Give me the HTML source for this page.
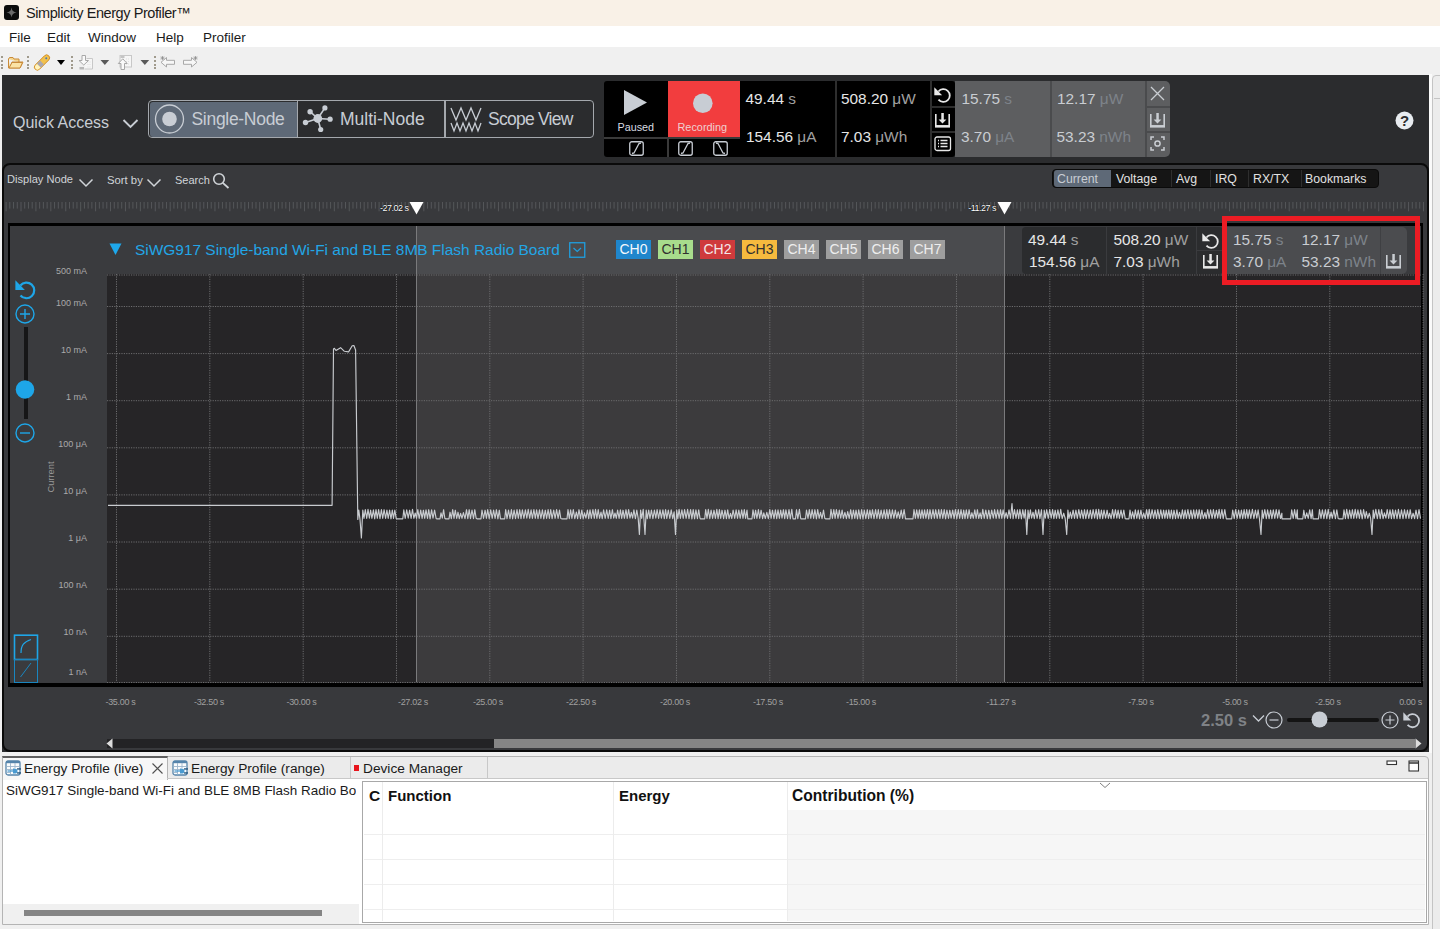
<!DOCTYPE html><html><head><meta charset="utf-8"><style>
*{margin:0;padding:0;box-sizing:border-box}
html,body{width:1440px;height:929px;overflow:hidden;background:#f0f0f0;font-family:"Liberation Sans", sans-serif}
.a{position:absolute;white-space:nowrap}
svg{position:absolute;overflow:visible}
</style></head><body>
<div class="a" style="left:0;top:0;width:1440px;height:26px;background:#f9f1e7"></div>
<div class="a" style="left:4px;top:5px;width:15px;height:15px;background:#0c0c0c;border-radius:3px"></div>
<svg style="left:4px;top:5px" width="15" height="15"><path d="M7.5,2.5 Q8,7 12.5,7.5 Q8,8 7.5,12.5 Q7,8 2.5,7.5 Q7,7 7.5,2.5Z" fill="#6a6a6a"/></svg>
<div class="a" style="left:26px;top:4.8px;font-size:14.5px;letter-spacing:-0.42px;color:#1a1a1a">Simplicity Energy Profiler™</div>
<div class="a" style="left:0;top:26px;width:1440px;height:21px;background:#ffffff"></div>
<div class="a" style="left:9px;top:30px;font-size:13.5px;color:#1a1a1a">File</div>
<div class="a" style="left:47px;top:30px;font-size:13.5px;color:#1a1a1a">Edit</div>
<div class="a" style="left:88px;top:30px;font-size:13.5px;color:#1a1a1a">Window</div>
<div class="a" style="left:156px;top:30px;font-size:13.5px;color:#1a1a1a">Help</div>
<div class="a" style="left:203px;top:30px;font-size:13.5px;color:#1a1a1a">Profiler</div>
<div class="a" style="left:0;top:47px;width:1440px;height:28px;background:#f0f0f0"></div>
<div class="a" style="left:1px;top:55.5px;width:2px;height:2px;background:#a09a8c"></div>
<div class="a" style="left:1px;top:59.5px;width:2px;height:2px;background:#a09a8c"></div>
<div class="a" style="left:1px;top:63.5px;width:2px;height:2px;background:#a09a8c"></div>
<div class="a" style="left:1px;top:67px;width:2px;height:2px;background:#a09a8c"></div>
<div class="a" style="left:27px;top:55.5px;width:2px;height:2px;background:#a09a8c"></div>
<div class="a" style="left:27px;top:59.5px;width:2px;height:2px;background:#a09a8c"></div>
<div class="a" style="left:27px;top:63.5px;width:2px;height:2px;background:#a09a8c"></div>
<div class="a" style="left:27px;top:67px;width:2px;height:2px;background:#a09a8c"></div>
<div class="a" style="left:71px;top:55.5px;width:2px;height:2px;background:#a09a8c"></div>
<div class="a" style="left:71px;top:59.5px;width:2px;height:2px;background:#a09a8c"></div>
<div class="a" style="left:71px;top:63.5px;width:2px;height:2px;background:#a09a8c"></div>
<div class="a" style="left:71px;top:67px;width:2px;height:2px;background:#a09a8c"></div>
<div class="a" style="left:154px;top:55.5px;width:2px;height:2px;background:#a09a8c"></div>
<div class="a" style="left:154px;top:59.5px;width:2px;height:2px;background:#a09a8c"></div>
<div class="a" style="left:154px;top:63.5px;width:2px;height:2px;background:#a09a8c"></div>
<div class="a" style="left:154px;top:67px;width:2px;height:2px;background:#a09a8c"></div>
<svg style="left:7px;top:56px" width="17" height="14"><path d="M1.5,3 L1.5,12 L13,12 L16,6 L5,6 L3,11 M1.5,3 L2.5,1.5 L6,1.5 L7,3 L12,3 L12,6" fill="#f5d58a" stroke="#c98b3a" stroke-width="1"/><path d="M2,12 L5,6.5 L15.5,6.5 L13,12 Z" fill="#fbe3a6" stroke="#c98b3a" stroke-width="1"/></svg>
<svg style="left:32px;top:53px" width="20" height="19"><g transform="rotate(-45 10 9.5)"><rect x="0.5" y="6.5" width="19" height="6" rx="3" fill="#f2c24e" stroke="#d08a24" stroke-width="0.9"/><rect x="5.5" y="6.8" width="4.5" height="5.4" fill="#a9a7b0"/><path d="M1,9.5 Q1,7 3.5,7 L5.5,7 L5.5,12 L3.5,12 Q1,12 1,9.5Z" fill="#fff4c0"/><circle cx="16" cy="9.5" r="1" fill="#4a7ab8"/></g></svg>
<svg style="left:56px;top:59px" width="10" height="7"><path d="M1,1 L9,1 L5,6 Z" fill="#000"/></svg>
<svg style="left:78px;top:54px" width="16" height="17"><path d="M8.5,4.5 L14.5,4.5 L14.5,15 L6.5,15" fill="#f6f6f6" stroke="#c8c8c8" stroke-width="1"/><path d="M9.5,8 L13,8 M9.5,10.5 L13,10.5 M9.5,13 L13,13" stroke="#dadada" stroke-width="0.8" stroke-dasharray="1,1"/><path d="M4,1.5 L7.5,1.5 L7.5,6.5 L10.5,6.5 L5.75,11 L1,6.5 L4,6.5 Z" fill="#fafafa" stroke="#a8a8a8" stroke-width="1"/><rect x="1.5" y="13" width="4.5" height="2.5" fill="#b8b8b8"/></svg>
<svg style="left:100px;top:59px" width="10" height="7"><path d="M0.5,1 L9.2,1 L4.85,6 Z" fill="#5a5a5a"/></svg>
<svg style="left:117px;top:54px" width="16" height="17"><rect x="3" y="1.5" width="11.5" height="11.5" fill="#f6f6f6" stroke="#c8c8c8" stroke-width="1"/><rect x="3.5" y="2" width="4" height="2" fill="#c4c4c4"/><path d="M9,5 L12.5,5 M9,7.5 L12.5,7.5 M9,10 L12.5,10" stroke="#dadada" stroke-width="0.8" stroke-dasharray="1,1"/><path d="M4,15.5 L7.5,15.5 L7.5,9.5 L10.2,9.5 L5.75,4.8 L1.3,9.5 L4,9.5 Z" fill="#fafafa" stroke="#a8a8a8" stroke-width="1"/></svg>
<svg style="left:140px;top:59px" width="10" height="7"><path d="M0.5,1 L9.2,1 L4.85,6 Z" fill="#5a5a5a"/></svg>
<svg style="left:160px;top:56px" width="16" height="13"><path d="M6.5,1.5 L1,6.3 L6.5,11 L6.5,8.3 L14.5,8.3 L14.5,4.3 L6.5,4.3 Z" fill="#f7f7f7" stroke="#a8a8a8" stroke-width="1" stroke-linejoin="round"/><path d="M1,0.5 L4,3.5 M4,0.5 L1,3.5 M2.5,0 L2.5,4 M0.5,2 L4.5,2" stroke="#8a8a8a" stroke-width="0.7"/></svg>
<svg style="left:181.5px;top:56px" width="16" height="13"><path d="M9.5,1.5 L15,6.3 L9.5,11 L9.5,8.3 L1.5,8.3 L1.5,4.3 L9.5,4.3 Z" fill="#f7f7f7" stroke="#a8a8a8" stroke-width="1" stroke-linejoin="round"/><path d="M12,0.5 L15,3.5 M15,0.5 L12,3.5 M13.5,0 L13.5,4 M11.5,2 L15.5,2" stroke="#8a8a8a" stroke-width="0.7"/></svg>
<div class="a" style="left:2px;top:75px;width:1427px;height:677px;background:#2b2c2e"></div>
<div class="a" style="left:1429px;top:74px;width:3px;height:855px;background:#fafafa"></div>
<div class="a" style="left:1432px;top:75px;width:30px;height:870px;background:#ececec;border:1.6px solid #c4c4c4;border-radius:4px"></div>
<div class="a" style="left:1433.5px;top:98px;width:8px;height:1px;background:#c4c4c4"></div>
<div class="a" style="left:13px;top:113.5px;font-size:16px;color:#c8cdd4">Quick Access</div>
<svg style="left:122px;top:118px" width="17" height="11"><path d="M1.5,2 L8.5,9 L15.5,2" fill="none" stroke="#c8cdd4" stroke-width="1.9"/></svg>
<div class="a" style="left:148px;top:100px;width:446px;height:38px;border:1.5px solid #a4a8ad;border-radius:4px;background:#2b2c2e"></div>
<div class="a" style="left:149.5px;top:101.5px;width:147px;height:35px;background:#5e6977;border-radius:3px 0 0 3px"></div>
<div class="a" style="left:296.5px;top:101px;width:1.5px;height:36px;background:#a4a8ad"></div>
<div class="a" style="left:444px;top:101px;width:1.5px;height:36px;background:#a4a8ad"></div>
<svg style="left:154px;top:104px" width="32" height="31"><circle cx="15.5" cy="15" r="14" fill="none" stroke="#c8cdd4" stroke-width="1.3"/><circle cx="15.5" cy="15" r="7.3" fill="#c8cdd4"/></svg>
<div class="a" style="left:191.5px;top:109px;font-size:17.5px;letter-spacing:-0.3px;color:#c8cdd4">Single-Node</div>
<svg style="left:298px;top:102px" width="40" height="34"><g stroke="#c8cdd4" stroke-width="1.6" fill="#c8cdd4"><line x1="19.8" y1="16.5" x2="26.9" y2="5.9"/><line x1="19.8" y1="16.5" x2="12.1" y2="9.7"/><line x1="19.8" y1="16.5" x2="32.1" y2="17.2"/><line x1="19.8" y1="16.5" x2="22.7" y2="27.5"/><line x1="19.8" y1="16.5" x2="7.5" y2="20.5"/></g><g fill="#c8cdd4"><circle cx="19.8" cy="16.5" r="4.4"/><circle cx="26.9" cy="5.9" r="2.6"/><circle cx="12.1" cy="9.7" r="2.7"/><circle cx="32.1" cy="17.2" r="2.6"/><circle cx="22.7" cy="27.5" r="2.6"/><circle cx="7.5" cy="20.5" r="2.7"/></g></svg>
<div class="a" style="left:340px;top:109px;font-size:17.5px;color:#c8cdd4">Multi-Node</div>
<svg style="left:450px;top:106px" width="32" height="27"><path d="M1,2 L6,14 L11,2 L16,14 L21,2 L26,14 L31,2" fill="none" stroke="#c8cdd4" stroke-width="1.3"/><path d="M1,17 L4,25 L7,17 L10,25 L13,17 L16,25 L19,17 L22,25 L25,17 L28,25 L31,17" fill="none" stroke="#c8cdd4" stroke-width="1.3"/></svg>
<div class="a" style="left:488px;top:109px;font-size:17.5px;letter-spacing:-0.75px;color:#c8cdd4">Scope View</div>
<div class="a" style="left:604px;top:81px;width:351px;height:76px;background:#000;border-radius:3px"></div>
<div class="a" style="left:668px;top:81px;width:72px;height:56px;background:#f23d3e"></div>
<div class="a" style="left:604px;top:137px;width:136px;height:1.5px;background:#3a3a3a"></div>
<div class="a" style="left:667px;top:137px;width:1.5px;height:20px;background:#3a3a3a"></div>
<svg style="left:623px;top:89px" width="26" height="28"><path d="M1,1 L24,13.5 L1,26 Z" fill="#c8cdd4"/></svg>
<div class="a" style="left:617.5px;top:121px;font-size:10.8px;color:#d8dce0">Paused</div>
<svg style="left:692px;top:93px" width="22" height="22"><circle cx="10.8" cy="10.2" r="9.8" fill="#c8cdd4"/></svg>
<div class="a" style="left:677.5px;top:121px;font-size:10.9px;color:#f0d0d0">Recording</div>
<svg style="left:629px;top:141px" width="15" height="15"><rect x="0.75" y="0.75" width="13.5" height="13.5" rx="2" fill="none" stroke="#c8cdd4" stroke-width="1.3"/><path d="M3,12.5 L5,12 L10,2.5 L12,2" fill="none" stroke="#c8cdd4" stroke-width="1.3"/></svg>
<svg style="left:678px;top:141px" width="15" height="15"><rect x="0.75" y="0.75" width="13.5" height="13.5" rx="2" fill="none" stroke="#c8cdd4" stroke-width="1.3"/><path d="M3,12.5 L5,12 L10,2.5 L12,2" fill="none" stroke="#c8cdd4" stroke-width="1.3"/></svg>
<svg style="left:713px;top:141px" width="15" height="15"><rect x="0.75" y="0.75" width="13.5" height="13.5" rx="2" fill="none" stroke="#c8cdd4" stroke-width="1.3"/><path d="M3,2 L5,2.5 L10,12 L12,12.5" fill="none" stroke="#c8cdd4" stroke-width="1.3"/></svg>
<div class="a" style="left:835px;top:81px;width:1.5px;height:76px;background:#2e2e2e"></div>
<div class="a" style="left:930px;top:81px;width:1.5px;height:76px;background:#2e2e2e"></div>
<div class="a" style="left:931px;top:106px;width:24px;height:1.5px;background:#2e2e2e"></div>
<div class="a" style="left:931px;top:131px;width:24px;height:1.5px;background:#2e2e2e"></div>
<div class="a" style="left:745.5px;top:89.5px;font-size:15.4px;color:#e6e6e6">49.44 <span style="color:#a0a0a0">s</span></div>
<div class="a" style="left:746px;top:127.5px;font-size:15.4px;color:#e6e6e6">154.56 <span style="color:#a0a0a0">μA</span></div>
<div class="a" style="left:841px;top:89.5px;font-size:15.4px;color:#e6e6e6">508.20 <span style="color:#a0a0a0">μW</span></div>
<div class="a" style="left:841px;top:127.5px;font-size:15.4px;color:#e6e6e6">7.03 <span style="color:#a0a0a0">μWh</span></div>
<svg style="left:933.5px;top:86.5px" width="18.0" height="17.0" viewBox="0 0 18 17"><path d="M0.3,0.3 L0.3,8.3 L8.1,8.3 Z" fill="#e8e8e8"/><path d="M4.4,4.5 A6.4,6.4 0 1 1 4.5,12.7" fill="none" stroke="#e8e8e8" stroke-width="1.8"/></svg>
<svg style="left:933.5px;top:112.5px" width="18.0" height="16.0" viewBox="0 0 18 16"><path d="M1.8,1 L1.8,13 L15.2,13 L15.2,1" fill="none" stroke="#e8e8e8" stroke-width="1.6"/><rect x="1" y="12.2" width="15" height="2.4" fill="#e8e8e8"/><rect x="7.3" y="0" width="2.5" height="7" fill="#e8e8e8"/><path d="M4.6,6.6 L12.4,6.6 L8.5,10.5 Z" fill="#e8e8e8"/></svg>
<svg style="left:934px;top:136px" width="18" height="16"><rect x="1" y="1" width="15.5" height="13.5" rx="2" fill="none" stroke="#e8e8e8" stroke-width="1.3"/><path d="M4,4.5 L5,4.5 M4,7.5 L5,7.5 M4,10.5 L5,10.5 M6.5,4.5 L13.5,4.5 M6.5,7.5 L13.5,7.5 M6.5,10.5 L13.5,10.5" stroke="#e8e8e8" stroke-width="1.3"/></svg>
<div class="a" style="left:955px;top:81px;width:215px;height:76px;background:#5d5e60;border-radius:0 5px 5px 0"></div>
<div class="a" style="left:1050px;top:81px;width:1.5px;height:76px;background:#4a4b4d"></div>
<div class="a" style="left:1145px;top:81px;width:1.5px;height:76px;background:#4a4b4d"></div>
<div class="a" style="left:1146px;top:106px;width:24px;height:1.5px;background:#4a4b4d"></div>
<div class="a" style="left:1146px;top:131px;width:24px;height:1.5px;background:#4a4b4d"></div>
<div class="a" style="left:961.5px;top:89.5px;font-size:15.4px;color:#c9cdd2">15.75 <span style="color:#7d838a">s</span></div>
<div class="a" style="left:961px;top:127.5px;font-size:15.4px;color:#c9cdd2">3.70 <span style="color:#7d838a">μA</span></div>
<div class="a" style="left:1057px;top:89.5px;font-size:15.4px;color:#c9cdd2">12.17 <span style="color:#7d838a">μW</span></div>
<div class="a" style="left:1056.5px;top:127.5px;font-size:15.4px;color:#c9cdd2">53.23 <span style="color:#7d838a">nWh</span></div>
<svg style="left:1149px;top:85px" width="17" height="17"><path d="M2,2 L15,15 M15,2 L2,15" stroke="#c9cdd2" stroke-width="1.3"/></svg>
<svg style="left:1149px;top:112.5px" width="18.0" height="16.0" viewBox="0 0 18 16"><path d="M1.8,1 L1.8,13 L15.2,13 L15.2,1" fill="none" stroke="#c9cdd2" stroke-width="1.6"/><rect x="1" y="12.2" width="15" height="2.4" fill="#c9cdd2"/><rect x="7.3" y="0" width="2.5" height="7" fill="#c9cdd2"/><path d="M4.6,6.6 L12.4,6.6 L8.5,10.5 Z" fill="#c9cdd2"/></svg>
<svg style="left:1149px;top:135px" width="17" height="17"><path d="M2,5 L2,2 L5,2 M12,2 L15,2 L15,5 M15,12 L15,15 L12,15 M5,15 L2,15 L2,12" fill="none" stroke="#c9cdd2" stroke-width="1.5"/><circle cx="8.5" cy="8.5" r="2.6" fill="none" stroke="#c9cdd2" stroke-width="1.5"/></svg>
<svg style="left:1395px;top:111px" width="20" height="20"><circle cx="9.5" cy="9.5" r="9" fill="#e8ecf0"/><text x="9.6" y="15.3" text-anchor="middle" font-family="Liberation Sans" font-weight="bold" font-size="15" fill="#2b2c2e">?</text></svg>
<div class="a" style="left:2px;top:163px;width:1427px;height:589px;background:#38393c;border:2px solid #0a0a0a;border-radius:8px"></div>
<div class="a" style="left:7px;top:173px;font-size:11.1px;color:#d0d4d8">Display Node</div>
<svg style="left:78px;top:178px" width="16" height="10"><path d="M1.5,1.5 L8,8 L14.5,1.5" fill="none" stroke="#d0d4d8" stroke-width="1.5"/></svg>
<div class="a" style="left:107px;top:173.5px;font-size:11.3px;color:#d0d4d8">Sort by</div>
<svg style="left:146px;top:178px" width="16" height="10"><path d="M1.5,1.5 L8,8 L14.5,1.5" fill="none" stroke="#d0d4d8" stroke-width="1.5"/></svg>
<div class="a" style="left:175px;top:173.5px;font-size:11px;color:#d0d4d8">Search</div>
<svg style="left:212px;top:172px" width="18" height="17"><circle cx="7" cy="7" r="5.3" fill="none" stroke="#d0d4d8" stroke-width="1.6"/><path d="M10.8,10.8 L16.5,16" stroke="#d0d4d8" stroke-width="1.8"/></svg>
<div class="a" style="left:1052px;top:168.5px;width:327px;height:19.5px;background:#151515;border:1px solid #0a0a0a;border-radius:4px"></div>
<div class="a" style="left:1053.5px;top:170px;width:57.5px;height:16.5px;background:#5e6977;border-radius:3px 0 0 3px"></div>
<div class="a" style="left:1171px;top:170px;width:1px;height:17px;background:#2e2e2e"></div>
<div class="a" style="left:1210px;top:170px;width:1px;height:17px;background:#2e2e2e"></div>
<div class="a" style="left:1248px;top:170px;width:1px;height:17px;background:#2e2e2e"></div>
<div class="a" style="left:1300.5px;top:170px;width:1px;height:17px;background:#2e2e2e"></div>
<div class="a" style="left:1057px;top:172px;font-size:12.3px;color:#c8cdd4">Current</div>
<div class="a" style="left:1116px;top:172px;font-size:12.3px;color:#e2e2e2">Voltage</div>
<div class="a" style="left:1176px;top:172px;font-size:12.3px;color:#e2e2e2">Avg</div>
<div class="a" style="left:1215px;top:172px;font-size:12.3px;color:#e2e2e2">IRQ</div>
<div class="a" style="left:1253px;top:172px;font-size:12.3px;color:#e2e2e2">RX/TX</div>
<div class="a" style="left:1305px;top:172px;font-size:12.3px;color:#e2e2e2">Bookmarks</div>
<svg style="left:0;top:0" width="1440" height="929"><path d="M6.08,202 L6.08,211.3 M9.81,202 L9.81,208.6 M13.54,202 L13.54,208.6 M17.27,202 L17.27,208.6 M21.00,202 L21.00,211.3 M24.73,202 L24.73,208.6 M28.46,202 L28.46,208.6 M32.19,202 L32.19,208.6 M35.92,202 L35.92,211.3 M39.65,202 L39.65,208.6 M43.38,202 L43.38,208.6 M47.11,202 L47.11,208.6 M50.84,202 L50.84,211.3 M54.57,202 L54.57,208.6 M58.30,202 L58.30,208.6 M62.03,202 L62.03,208.6 M65.76,202 L65.76,211.3 M69.49,202 L69.49,208.6 M73.22,202 L73.22,208.6 M76.95,202 L76.95,208.6 M80.68,202 L80.68,211.3 M84.41,202 L84.41,208.6 M88.14,202 L88.14,208.6 M91.87,202 L91.87,208.6 M95.60,202 L95.60,211.3 M99.33,202 L99.33,208.6 M103.06,202 L103.06,208.6 M106.79,202 L106.79,208.6 M110.52,202 L110.52,211.3 M114.25,202 L114.25,208.6 M117.98,202 L117.98,208.6 M121.71,202 L121.71,208.6 M125.44,202 L125.44,211.3 M129.17,202 L129.17,208.6 M132.90,202 L132.90,208.6 M136.63,202 L136.63,208.6 M140.36,202 L140.36,211.3 M144.09,202 L144.09,208.6 M147.82,202 L147.82,208.6 M151.55,202 L151.55,208.6 M155.28,202 L155.28,211.3 M159.01,202 L159.01,208.6 M162.74,202 L162.74,208.6 M166.47,202 L166.47,208.6 M170.20,202 L170.20,211.3 M173.93,202 L173.93,208.6 M177.66,202 L177.66,208.6 M181.39,202 L181.39,208.6 M185.12,202 L185.12,211.3 M188.85,202 L188.85,208.6 M192.58,202 L192.58,208.6 M196.31,202 L196.31,208.6 M200.04,202 L200.04,211.3 M203.77,202 L203.77,208.6 M207.50,202 L207.50,208.6 M211.23,202 L211.23,208.6 M214.96,202 L214.96,211.3 M218.69,202 L218.69,208.6 M222.42,202 L222.42,208.6 M226.15,202 L226.15,208.6 M229.88,202 L229.88,211.3 M233.61,202 L233.61,208.6 M237.34,202 L237.34,208.6 M241.07,202 L241.07,208.6 M244.80,202 L244.80,211.3 M248.53,202 L248.53,208.6 M252.26,202 L252.26,208.6 M255.99,202 L255.99,208.6 M259.72,202 L259.72,211.3 M263.45,202 L263.45,208.6 M267.18,202 L267.18,208.6 M270.91,202 L270.91,208.6 M274.64,202 L274.64,211.3 M278.37,202 L278.37,208.6 M282.10,202 L282.10,208.6 M285.83,202 L285.83,208.6 M289.56,202 L289.56,211.3 M293.29,202 L293.29,208.6 M297.02,202 L297.02,208.6 M300.75,202 L300.75,208.6 M304.48,202 L304.48,211.3 M308.21,202 L308.21,208.6 M311.94,202 L311.94,208.6 M315.67,202 L315.67,208.6 M319.40,202 L319.40,211.3 M323.13,202 L323.13,208.6 M326.86,202 L326.86,208.6 M330.59,202 L330.59,208.6 M334.32,202 L334.32,211.3 M338.05,202 L338.05,208.6 M341.78,202 L341.78,208.6 M345.51,202 L345.51,208.6 M349.24,202 L349.24,211.3 M352.97,202 L352.97,208.6 M356.70,202 L356.70,208.6 M360.43,202 L360.43,208.6 M364.16,202 L364.16,211.3 M367.89,202 L367.89,208.6 M371.62,202 L371.62,208.6 M375.35,202 L375.35,208.6 M379.08,202 L379.08,211.3 M382.81,202 L382.81,208.6 M386.54,202 L386.54,208.6 M390.27,202 L390.27,208.6 M394.00,202 L394.00,211.3 M397.73,202 L397.73,208.6 M401.46,202 L401.46,208.6 M405.19,202 L405.19,208.6 M408.92,202 L408.92,211.3 M412.65,202 L412.65,208.6 M416.38,202 L416.38,208.6 M420.11,202 L420.11,208.6 M423.84,202 L423.84,211.3 M427.57,202 L427.57,208.6 M431.30,202 L431.30,208.6 M435.03,202 L435.03,208.6 M438.76,202 L438.76,211.3 M442.49,202 L442.49,208.6 M446.22,202 L446.22,208.6 M449.95,202 L449.95,208.6 M453.68,202 L453.68,211.3 M457.41,202 L457.41,208.6 M461.14,202 L461.14,208.6 M464.87,202 L464.87,208.6 M468.60,202 L468.60,211.3 M472.33,202 L472.33,208.6 M476.06,202 L476.06,208.6 M479.79,202 L479.79,208.6 M483.52,202 L483.52,211.3 M487.25,202 L487.25,208.6 M490.98,202 L490.98,208.6 M494.71,202 L494.71,208.6 M498.44,202 L498.44,211.3 M502.17,202 L502.17,208.6 M505.90,202 L505.90,208.6 M509.63,202 L509.63,208.6 M513.36,202 L513.36,211.3 M517.09,202 L517.09,208.6 M520.82,202 L520.82,208.6 M524.55,202 L524.55,208.6 M528.28,202 L528.28,211.3 M532.01,202 L532.01,208.6 M535.74,202 L535.74,208.6 M539.47,202 L539.47,208.6 M543.20,202 L543.20,211.3 M546.93,202 L546.93,208.6 M550.66,202 L550.66,208.6 M554.39,202 L554.39,208.6 M558.12,202 L558.12,211.3 M561.85,202 L561.85,208.6 M565.58,202 L565.58,208.6 M569.31,202 L569.31,208.6 M573.04,202 L573.04,211.3 M576.77,202 L576.77,208.6 M580.50,202 L580.50,208.6 M584.23,202 L584.23,208.6 M587.96,202 L587.96,211.3 M591.69,202 L591.69,208.6 M595.42,202 L595.42,208.6 M599.15,202 L599.15,208.6 M602.88,202 L602.88,211.3 M606.61,202 L606.61,208.6 M610.34,202 L610.34,208.6 M614.07,202 L614.07,208.6 M617.80,202 L617.80,211.3 M621.53,202 L621.53,208.6 M625.26,202 L625.26,208.6 M628.99,202 L628.99,208.6 M632.72,202 L632.72,211.3 M636.45,202 L636.45,208.6 M640.18,202 L640.18,208.6 M643.91,202 L643.91,208.6 M647.64,202 L647.64,211.3 M651.37,202 L651.37,208.6 M655.10,202 L655.10,208.6 M658.83,202 L658.83,208.6 M662.56,202 L662.56,211.3 M666.29,202 L666.29,208.6 M670.02,202 L670.02,208.6 M673.75,202 L673.75,208.6 M677.48,202 L677.48,211.3 M681.21,202 L681.21,208.6 M684.94,202 L684.94,208.6 M688.67,202 L688.67,208.6 M692.40,202 L692.40,211.3 M696.13,202 L696.13,208.6 M699.86,202 L699.86,208.6 M703.59,202 L703.59,208.6 M707.32,202 L707.32,211.3 M711.05,202 L711.05,208.6 M714.78,202 L714.78,208.6 M718.51,202 L718.51,208.6 M722.24,202 L722.24,211.3 M725.97,202 L725.97,208.6 M729.70,202 L729.70,208.6 M733.43,202 L733.43,208.6 M737.16,202 L737.16,211.3 M740.89,202 L740.89,208.6 M744.62,202 L744.62,208.6 M748.35,202 L748.35,208.6 M752.08,202 L752.08,211.3 M755.81,202 L755.81,208.6 M759.54,202 L759.54,208.6 M763.27,202 L763.27,208.6 M767.00,202 L767.00,211.3 M770.73,202 L770.73,208.6 M774.46,202 L774.46,208.6 M778.19,202 L778.19,208.6 M781.92,202 L781.92,211.3 M785.65,202 L785.65,208.6 M789.38,202 L789.38,208.6 M793.11,202 L793.11,208.6 M796.84,202 L796.84,211.3 M800.57,202 L800.57,208.6 M804.30,202 L804.30,208.6 M808.03,202 L808.03,208.6 M811.76,202 L811.76,211.3 M815.49,202 L815.49,208.6 M819.22,202 L819.22,208.6 M822.95,202 L822.95,208.6 M826.68,202 L826.68,211.3 M830.41,202 L830.41,208.6 M834.14,202 L834.14,208.6 M837.87,202 L837.87,208.6 M841.60,202 L841.60,211.3 M845.33,202 L845.33,208.6 M849.06,202 L849.06,208.6 M852.79,202 L852.79,208.6 M856.52,202 L856.52,211.3 M860.25,202 L860.25,208.6 M863.98,202 L863.98,208.6 M867.71,202 L867.71,208.6 M871.44,202 L871.44,211.3 M875.17,202 L875.17,208.6 M878.90,202 L878.90,208.6 M882.63,202 L882.63,208.6 M886.36,202 L886.36,211.3 M890.09,202 L890.09,208.6 M893.82,202 L893.82,208.6 M897.55,202 L897.55,208.6 M901.28,202 L901.28,211.3 M905.01,202 L905.01,208.6 M908.74,202 L908.74,208.6 M912.47,202 L912.47,208.6 M916.20,202 L916.20,211.3 M919.93,202 L919.93,208.6 M923.66,202 L923.66,208.6 M927.39,202 L927.39,208.6 M931.12,202 L931.12,211.3 M934.85,202 L934.85,208.6 M938.58,202 L938.58,208.6 M942.31,202 L942.31,208.6 M946.04,202 L946.04,211.3 M949.77,202 L949.77,208.6 M953.50,202 L953.50,208.6 M957.23,202 L957.23,208.6 M960.96,202 L960.96,211.3 M964.69,202 L964.69,208.6 M968.42,202 L968.42,208.6 M972.15,202 L972.15,208.6 M975.88,202 L975.88,211.3 M979.61,202 L979.61,208.6 M983.34,202 L983.34,208.6 M987.07,202 L987.07,208.6 M990.80,202 L990.80,211.3 M994.53,202 L994.53,208.6 M998.26,202 L998.26,208.6 M1001.99,202 L1001.99,208.6 M1005.72,202 L1005.72,211.3 M1009.45,202 L1009.45,208.6 M1013.18,202 L1013.18,208.6 M1016.91,202 L1016.91,208.6 M1020.64,202 L1020.64,211.3 M1024.37,202 L1024.37,208.6 M1028.10,202 L1028.10,208.6 M1031.83,202 L1031.83,208.6 M1035.56,202 L1035.56,211.3 M1039.29,202 L1039.29,208.6 M1043.02,202 L1043.02,208.6 M1046.75,202 L1046.75,208.6 M1050.48,202 L1050.48,211.3 M1054.21,202 L1054.21,208.6 M1057.94,202 L1057.94,208.6 M1061.67,202 L1061.67,208.6 M1065.40,202 L1065.40,211.3 M1069.13,202 L1069.13,208.6 M1072.86,202 L1072.86,208.6 M1076.59,202 L1076.59,208.6 M1080.32,202 L1080.32,211.3 M1084.05,202 L1084.05,208.6 M1087.78,202 L1087.78,208.6 M1091.51,202 L1091.51,208.6 M1095.24,202 L1095.24,211.3 M1098.97,202 L1098.97,208.6 M1102.70,202 L1102.70,208.6 M1106.43,202 L1106.43,208.6 M1110.16,202 L1110.16,211.3 M1113.89,202 L1113.89,208.6 M1117.62,202 L1117.62,208.6 M1121.35,202 L1121.35,208.6 M1125.08,202 L1125.08,211.3 M1128.81,202 L1128.81,208.6 M1132.54,202 L1132.54,208.6 M1136.27,202 L1136.27,208.6 M1140.00,202 L1140.00,211.3 M1143.73,202 L1143.73,208.6 M1147.46,202 L1147.46,208.6 M1151.19,202 L1151.19,208.6 M1154.92,202 L1154.92,211.3 M1158.65,202 L1158.65,208.6 M1162.38,202 L1162.38,208.6 M1166.11,202 L1166.11,208.6 M1169.84,202 L1169.84,211.3 M1173.57,202 L1173.57,208.6 M1177.30,202 L1177.30,208.6 M1181.03,202 L1181.03,208.6 M1184.76,202 L1184.76,211.3 M1188.49,202 L1188.49,208.6 M1192.22,202 L1192.22,208.6 M1195.95,202 L1195.95,208.6 M1199.68,202 L1199.68,211.3 M1203.41,202 L1203.41,208.6 M1207.14,202 L1207.14,208.6 M1210.87,202 L1210.87,208.6 M1214.60,202 L1214.60,211.3 M1218.33,202 L1218.33,208.6 M1222.06,202 L1222.06,208.6 M1225.79,202 L1225.79,208.6 M1229.52,202 L1229.52,211.3 M1233.25,202 L1233.25,208.6 M1236.98,202 L1236.98,208.6 M1240.71,202 L1240.71,208.6 M1244.44,202 L1244.44,211.3 M1248.17,202 L1248.17,208.6 M1251.90,202 L1251.90,208.6 M1255.63,202 L1255.63,208.6 M1259.36,202 L1259.36,211.3 M1263.09,202 L1263.09,208.6 M1266.82,202 L1266.82,208.6 M1270.55,202 L1270.55,208.6 M1274.28,202 L1274.28,211.3 M1278.01,202 L1278.01,208.6 M1281.74,202 L1281.74,208.6 M1285.47,202 L1285.47,208.6 M1289.20,202 L1289.20,211.3 M1292.93,202 L1292.93,208.6 M1296.66,202 L1296.66,208.6 M1300.39,202 L1300.39,208.6 M1304.12,202 L1304.12,211.3 M1307.85,202 L1307.85,208.6 M1311.58,202 L1311.58,208.6 M1315.31,202 L1315.31,208.6 M1319.04,202 L1319.04,211.3 M1322.77,202 L1322.77,208.6 M1326.50,202 L1326.50,208.6 M1330.23,202 L1330.23,208.6 M1333.96,202 L1333.96,211.3 M1337.69,202 L1337.69,208.6 M1341.42,202 L1341.42,208.6 M1345.15,202 L1345.15,208.6 M1348.88,202 L1348.88,211.3 M1352.61,202 L1352.61,208.6 M1356.34,202 L1356.34,208.6 M1360.07,202 L1360.07,208.6 M1363.80,202 L1363.80,211.3 M1367.53,202 L1367.53,208.6 M1371.26,202 L1371.26,208.6 M1374.99,202 L1374.99,208.6 M1378.72,202 L1378.72,211.3 M1382.45,202 L1382.45,208.6 M1386.18,202 L1386.18,208.6 M1389.91,202 L1389.91,208.6 M1393.64,202 L1393.64,211.3 M1397.37,202 L1397.37,208.6 M1401.10,202 L1401.10,208.6 M1404.83,202 L1404.83,208.6 M1408.56,202 L1408.56,211.3 M1412.29,202 L1412.29,208.6 M1416.02,202 L1416.02,208.6 M1419.75,202 L1419.75,208.6 M1423.48,202 L1423.48,211.3" stroke="#55575a" stroke-width="1"/></svg>
<div class="a" style="left:7.5px;top:223px;width:1415.5px;height:463.5px;background:#000"></div>
<div class="a" style="left:9.5px;top:225.5px;width:1411.5px;height:457px;background:#3a3b3e"></div>
<div class="a" style="left:107px;top:274px;width:1314px;height:408.5px;background:#262527"></div>
<div class="a" style="left:417px;top:225.5px;width:587px;height:48.5px;background:#4a4b4e"></div>
<div class="a" style="left:417px;top:274px;width:587px;height:408px;background:#3c3b3d"></div>
<div class="a" style="left:416px;top:225.5px;width:1px;height:456.5px;background:#7a7a7c"></div>
<div class="a" style="left:1003.5px;top:225.5px;width:1px;height:456.5px;background:#7a7a7c"></div>
<svg style="left:0;top:0" width="1440" height="929"><path d="M116.5,274 L116.5,682 M209.8,274 L209.8,682 M303.2,274 L303.2,682 M396.5,274 L396.5,682 M489.8,274 L489.8,682 M583.1,274 L583.1,682 M676.5,274 L676.5,682 M769.8,274 L769.8,682 M863.1,274 L863.1,682 M956.5,274 L956.5,682 M1049.8,274 L1049.8,682 M1143.1,274 L1143.1,682 M1236.5,274 L1236.5,682 M1329.8,274 L1329.8,682 M1423.1,274 L1423.1,682 M107,275.0 L1421,275.0 M107,306.5 L1421,306.5 M107,353.6 L1421,353.6 M107,400.7 L1421,400.7 M107,447.8 L1421,447.8 M107,494.9 L1421,494.9 M107,542.0 L1421,542.0 M107,589.2 L1421,589.2 M107,636.3 L1421,636.3 M107,682.5 L1421,682.5" stroke="#6c6c6e" stroke-width="1" stroke-dasharray="1.2,1.2" fill="none"/></svg>
<svg style="left:0;top:0" width="1440" height="929"><path d="M108,505.3 L332.1,505.3 L333.5,349 L334.4,348.3 L336,350.5 L340.6,347.7 L344.4,351.3 L348.6,351.9 L352.2,345.8 L353.9,345.5 L355.6,350 L357.8,519.4 L358.8,510 L360,519.4 L361.4,538 L362.8,510 L364.0,518.4 L365.3,509.5 L366.7,518.4 L368.0,509.4 L369.4,518.2 L370.6,510.1 L371.9,518.3 L373.4,509.9 L374.7,518.8 L376.0,509.6 L377.3,518.3 L378.6,509.5 L380.0,518.6 L381.4,509.5 L382.7,518.3 L384.1,509.7 L385.6,518.5 L386.9,510.0 L388.2,518.5 L389.6,510.0 L391.0,518.8 L392.3,510.0 L393.5,518.5 L394.8,510.0 L396.2,518.7 L396.7,518.8 L402.8,518.8 L403.8,509.9 L405.2,518.5 L406.7,509.8 L408.2,518.2 L409.6,510.2 L411.1,518.4 L412.5,509.4 L413.9,518.3 L415.2,513.0 L416.5,518.3 L417.8,509.5 L419.2,518.5 L420.7,510.1 L422.1,518.4 L423.4,510.2 L424.7,518.3 L426.0,509.8 L427.5,518.4 L428.7,509.7 L430.1,518.8 L431.6,509.9 L433.0,518.2 L434.6,510.1 L436.1,518.4 L436.7,518.8 L440,518.8 L441.0,512.8 L442.3,518.2 L443.6,509.7 L444.8,518.2 L445.5,518.8 L449,518.8 L450.0,512.2 L451.3,518.7 L452.7,509.6 L454.0,518.4 L455.3,510.2 L456.7,518.5 L458.0,512.2 L459.3,518.7 L460.6,513.4 L462.0,518.3 L463.4,512.6 L465.0,518.7 L466.5,509.7 L467.8,518.7 L469.2,509.7 L470.5,518.7 L472.0,510.0 L473.5,518.6 L474.8,509.7 L476.1,518.2 L477,518.8 L481,518.8 L482.0,510.0 L483.5,518.5 L485.1,510.2 L486.4,518.3 L487.7,509.6 L489.2,518.7 L490.7,509.9 L492.2,518.3 L493.6,510.0 L495.1,518.5 L496.4,509.7 L497.9,518.8 L499.3,510.2 L500.5,518.8 L504.7,518.8 L505.7,509.5 L507.0,518.7 L508.5,510.1 L510.0,518.6 L511.4,509.5 L512.6,518.8 L514.1,510.1 L515.5,518.7 L517.0,509.6 L518.3,518.3 L519.7,509.7 L521.0,518.7 L522.4,509.9 L523.9,518.5 L525.4,509.8 L526.8,518.2 L528.2,509.4 L529.7,518.3 L531.1,509.8 L532.4,518.5 L533.9,509.5 L535.3,518.3 L536.6,509.8 L538.0,518.7 L539.5,509.9 L540.9,518.5 L542.4,509.8 L543.8,518.8 L545.3,510.2 L546.6,518.5 L548.1,509.5 L549.4,518.5 L550.7,509.5 L552.1,518.7 L553.7,510.0 L555.1,518.3 L556.6,509.6 L558.1,518.4 L559.5,510.1 L560.8,518.5 L561.7,518.8 L567,518.8 L568.0,509.6 L569.3,518.6 L570.6,509.8 L571.9,518.4 L573.3,509.5 L574.8,518.7 L576.4,512.0 L577.6,518.7 L579.0,509.7 L580.5,518.7 L581.8,510.1 L583.2,518.6 L584.5,512.9 L585.9,518.2 L587.4,510.0 L588.7,518.7 L590.0,509.8 L591.3,518.5 L592.9,509.5 L594.3,518.3 L595.5,509.4 L596.9,518.4 L598.2,509.6 L599.6,518.3 L601.0,512.0 L602.2,518.6 L603.6,509.8 L605.2,518.3 L606.7,509.8 L608.2,518.4 L609.6,510.2 L610.9,518.7 L612.4,509.7 L613.7,518.2 L615.0,513.0 L616.3,518.3 L617.6,510.1 L619.1,518.4 L620.4,509.8 L621.7,518.5 L623.0,510.2 L624.4,518.3 L626.0,509.7 L627.2,518.4 L628.6,509.6 L630.0,518.2 L631.3,512.3 L632.6,518.2 L633.9,509.9 L635.4,518.7 L636.8,510.1 L638.2,518.4 L639.4,534.5 L640.6,510 L641.7,518.3 L643.2,509.4 L645,534.5 L646.2,510 L647.3,518.7 L648.7,510.0 L650.0,518.5 L651.4,510.0 L652.9,518.6 L654.4,510.0 L655.8,518.2 L657.1,509.5 L658.6,518.5 L660.0,509.9 L661.4,518.2 L662.9,509.8 L664.3,518.6 L665.6,509.6 L666.8,518.4 L668.3,510.0 L669.8,518.5 L671.2,509.9 L672.7,518.6 L674.1,511.8 L675.5,534.5 L676.7,510 L677.8,518.6 L679.1,509.4 L680.4,518.4 L681.9,509.9 L683.2,518.5 L684.6,509.5 L686.1,518.3 L687.6,509.4 L689.0,518.7 L690.6,509.6 L691.9,518.8 L693.2,509.5 L694.6,518.8 L695.9,509.8 L697.4,518.6 L698.7,509.8 L700.0,518.2 L700.5,518.8 L704.7,518.8 L705.7,509.6 L707.0,518.4 L708.3,509.4 L709.8,518.7 L711.1,510.0 L712.6,518.4 L714.0,510.2 L715.4,518.4 L716.8,509.4 L718.1,518.7 L719.4,509.6 L720.7,518.5 L722.0,510.2 L723.6,518.7 L725.0,510.2 L726.4,518.6 L727.7,509.8 L729.1,518.6 L730.5,513.4 L731.8,518.5 L733.1,510.0 L734.7,518.4 L736.1,509.8 L737.5,518.3 L738.8,510.1 L740.2,518.3 L741.7,509.8 L743.0,518.3 L744.3,509.5 L745.6,518.4 L747.0,510.0 L747.8,518.8 L752,518.8 L753.0,509.8 L754.4,518.4 L755.6,510.2 L756.9,518.5 L758.4,509.6 L759.7,518.3 L761.1,510.2 L762.6,518.7 L763.8,512.9 L765.3,518.5 L766.8,512.3 L768.3,518.7 L769.8,509.6 L771.1,518.3 L772.5,510.2 L774.0,518.6 L775.4,509.8 L776.7,518.7 L778.0,509.9 L779.4,518.3 L780.7,510.0 L782.0,518.2 L783.4,509.7 L784.7,518.6 L785.9,509.8 L787.5,518.6 L789.0,509.6 L790.3,518.8 L791.8,509.4 L793,518.8 L795.5,518.8 L796.5,509.7 L797.8,518.6 L799.4,509.4 L800.7,518.5 L801,518.8 L805.5,518.8 L806.5,510.0 L808.0,518.5 L809.3,509.6 L810.8,518.3 L812.1,509.6 L813.6,518.5 L814.9,509.7 L816.4,518.8 L817.7,509.6 L819.2,518.3 L820.5,512.3 L822.0,518.7 L823.5,510.1 L824.8,518.3 L825.5,518.8 L830,518.8 L831.0,509.4 L832.4,518.4 L833.8,509.5 L835.1,518.4 L836.4,509.5 L838.0,518.3 L839.3,510.1 L840.7,518.2 L842.1,510.1 L843.4,518.4 L844.9,512.3 L846.4,518.7 L847.7,511.6 L849.2,518.4 L850.7,509.7 L852.0,518.8 L853.4,510.0 L854.8,518.4 L856.0,510.1 L857.5,518.8 L858.7,509.8 L860.3,518.8 L861.6,509.7 L863.0,518.8 L864.3,510.0 L865.8,518.7 L867.3,509.7 L868.6,518.7 L869.9,510.0 L871.2,518.2 L872.5,509.7 L874.0,518.7 L875.6,509.5 L876.9,518.5 L878.3,509.6 L879.7,518.6 L881.1,510.1 L882.6,518.3 L884.1,509.9 L885.5,518.6 L886.8,509.6 L888.1,518.7 L889.5,509.7 L891.0,518.5 L892.4,509.9 L893.9,518.3 L895.3,510.1 L896.8,518.2 L898.2,511.9 L899.7,518.5 L901.2,510.1 L902.6,518.4 L904.1,509.5 L905.5,518.8 L913,518.8 L914.0,509.6 L915.4,518.3 L916.7,509.9 L918.1,518.3 L919.4,509.9 L920.7,518.4 L922.0,509.8 L923.3,518.3 L924.6,509.9 L925.9,518.3 L927.4,509.6 L928.7,518.8 L930.0,509.7 L931.4,518.7 L933.0,509.6 L934.4,518.3 L935.7,509.7 L937.2,518.4 L938.7,509.5 L940.0,518.5 L941.4,509.5 L942.8,518.4 L944.2,509.6 L945.6,518.8 L946.9,510.0 L948.5,518.3 L949.8,510.2 L951.1,518.2 L952.7,510.1 L954.1,518.7 L955.4,509.6 L956.8,518.7 L958.3,509.6 L959.7,518.5 L961.0,509.6 L962.5,518.7 L963.7,510.0 L965.0,518.7 L966.3,509.8 L967.7,518.4 L969.1,509.7 L970.6,518.5 L971.9,512.7 L973.3,518.3 L974.8,509.8 L976.1,518.5 L977.4,509.7 L978.7,518.5 L980.1,512.8 L981.4,518.6 L982.8,509.4 L984.2,518.4 L985.8,510.1 L987.3,518.6 L988.8,510.2 L990.2,518.8 L991.7,510.0 L993.3,518.2 L994.6,509.5 L996.1,518.4 L997.6,509.8 L999.2,518.3 L1000.5,509.7 L1001.8,518.3 L1003.1,509.9 L1004.6,518.3 L1006.1,512.6 L1007.5,518.4 L1009.0,509.9 L1010.5,518.3 L1012,503.5 L1013.1,518.6 L1014.5,509.6 L1016.0,518.5 L1017.4,509.8 L1018.7,518.6 L1019.9,509.6 L1021.4,518.8 L1022.8,509.7 L1024.1,518.2 L1025.4,509.7 L1026.8,534.5 L1028.0,510 L1029.1,518.7 L1030.4,509.9 L1031.6,518.2 L1033.0,512.2 L1034.3,518.6 L1035.7,509.9 L1037.1,518.3 L1038.7,509.5 L1039.9,518.6 L1041.5,509.7 L1043,534.5 L1044.2,510 L1045.3,518.2 L1046.7,509.7 L1048.2,518.5 L1049.7,509.6 L1051.2,518.2 L1052.6,509.6 L1053.9,518.7 L1055.2,510.2 L1056.5,518.3 L1057.9,509.9 L1059.4,518.3 L1060.7,509.4 L1062.2,518.7 L1063.7,513.2 L1065.2,518.5 L1066.7,534.5 L1067.9,510 L1069.0,518.5 L1070.3,512.0 L1071.6,518.4 L1073.1,510.1 L1074.5,518.4 L1075.9,510.0 L1077.3,518.4 L1078.8,509.6 L1080.3,518.2 L1081.6,510.0 L1083.2,518.6 L1084.5,509.7 L1085.8,518.7 L1087.3,509.9 L1088.8,518.5 L1090.3,510.1 L1091.7,518.6 L1093.1,509.6 L1094.6,518.2 L1096.1,509.4 L1097.4,518.8 L1098.7,509.4 L1100.0,518.6 L1101.4,510.0 L1102.7,518.6 L1104.0,510.1 L1105.6,518.2 L1107.1,510.2 L1108.4,518.3 L1109.6,513.2 L1111.1,518.6 L1112.6,509.6 L1113.9,518.3 L1115.4,509.7 L1116.8,518.2 L1118.1,510.0 L1119.4,518.4 L1121.0,510.1 L1122.4,518.2 L1123.8,510.0 L1125.2,518.6 L1125.8,518.8 L1129,518.8 L1130.0,510.1 L1131.3,518.7 L1132.6,511.9 L1134.1,518.8 L1135.3,509.8 L1136.8,518.3 L1138.2,510.1 L1139.5,518.8 L1140.9,510.0 L1142.3,518.3 L1143.7,513.1 L1145.2,518.7 L1146.6,509.7 L1148.0,518.7 L1149.2,509.4 L1150.6,518.4 L1152.1,509.7 L1153.6,518.3 L1155.0,510.0 L1156.5,518.6 L1157.8,509.5 L1159.3,518.6 L1160.8,509.8 L1162.3,518.5 L1163.6,510.1 L1164.9,518.3 L1166.2,510.1 L1167.5,518.3 L1168.8,509.8 L1170.1,518.4 L1171.4,510.0 L1172.7,518.8 L1174.0,510.2 L1175.5,518.6 L1176.9,509.9 L1178.2,518.3 L1179.5,512.3 L1181.0,518.6 L1182.4,509.8 L1183.7,518.6 L1185.1,510.1 L1186.4,518.5 L1187.9,509.6 L1189.4,518.7 L1190.9,510.1 L1192.3,518.6 L1193.7,509.9 L1195.0,518.5 L1196.5,509.9 L1197.8,518.5 L1199.2,509.7 L1200.6,518.8 L1201.9,510.0 L1203.3,518.5 L1204.9,512.6 L1206.2,518.7 L1207.7,509.5 L1209.1,518.5 L1210.6,509.9 L1212.1,518.5 L1213.4,509.6 L1214.9,518.4 L1216.4,510.2 L1217.7,518.2 L1219.1,509.4 L1220.4,518.5 L1221.9,509.6 L1223.2,518.6 L1224.8,509.6 L1226.2,518.4 L1226.5,518.8 L1231.7,518.8 L1232.7,510.0 L1234.2,518.6 L1235.6,509.6 L1237.1,518.4 L1238.6,510.1 L1240.0,518.4 L1241.4,510.1 L1242.7,518.7 L1244.1,509.6 L1245.4,518.3 L1246.7,509.6 L1248.0,518.4 L1249.4,509.9 L1250.8,518.4 L1252.4,509.4 L1253.9,518.7 L1255.4,510.1 L1256.8,518.2 L1258.1,509.9 L1259.4,518.3 L1261,534.5 L1262.2,510 L1263.3,518.3 L1264.8,509.5 L1266.3,518.7 L1267.6,509.9 L1269.1,518.6 L1270.6,510.1 L1271.9,518.6 L1273.3,509.8 L1274.8,518.5 L1276.2,509.5 L1277.6,518.2 L1279.0,509.8 L1280.4,518.5 L1281.9,513.2 L1282,518.8 L1290.7,518.8 L1291.7,509.9 L1293.2,518.4 L1294.6,509.5 L1296.0,518.6 L1297.3,509.9 L1297.6,518.8 L1302.8,518.8 L1303.8,510.2 L1305.2,518.5 L1306.7,512.9 L1308.2,518.4 L1309.7,509.8 L1311.1,518.7 L1312.4,509.7 L1313,518.8 L1318.5,518.8 L1319.5,509.6 L1321.0,518.4 L1322.4,509.8 L1323.9,518.6 L1325.4,509.7 L1326.8,518.6 L1328.2,509.4 L1329.7,518.7 L1331.1,512.1 L1332.3,518.3 L1333.9,509.9 L1335.4,518.7 L1336.8,509.9 L1338.2,518.6 L1339,518.8 L1343,518.8 L1344.0,509.9 L1345.4,518.7 L1346.7,509.4 L1348.2,518.7 L1349.6,510.1 L1351.1,518.5 L1352.4,509.7 L1353.8,518.5 L1355.2,509.4 L1356.6,518.2 L1357.9,509.9 L1359.4,518.5 L1360.7,509.9 L1362.2,518.8 L1363.6,509.5 L1365.1,518.3 L1366.3,511.5 L1367.8,518.3 L1369.3,513.2 L1370.6,518.2 L1372,534.5 L1373.2,510 L1374.3,518.3 L1375.8,509.4 L1377.3,518.6 L1378.8,509.5 L1380.2,518.6 L1381.6,509.6 L1383.1,518.6 L1384.4,512.8 L1385.9,518.2 L1387.2,509.5 L1388.7,518.5 L1390.0,509.9 L1391.4,518.6 L1392.7,509.7 L1394.1,518.6 L1395.5,510.0 L1397.0,518.7 L1398.4,509.4 L1400.0,518.6 L1401.5,509.9 L1403.0,518.7 L1404.5,509.7 L1406.0,518.4 L1407.4,510.1 L1408.9,518.4 L1410.2,509.7 L1411.6,518.7 L1413.1,513.2 L1414.6,518.7 L1416.0,510.1 L1417.5,518.6 L1419.0,509.5 L1420.5,518.7" stroke="#c8cbcf" stroke-width="1.15" fill="none" stroke-linejoin="round"/></svg>
<svg style="left:409.0px;top:201px" width="15" height="14"><path d="M0.5,1 L14.5,1 L7.5,13.5 Z" fill="#fff"/></svg><div class="a" style="left:376.5px;top:203px;width:32px;text-align:right;font-size:9px;letter-spacing:-0.5px;color:#fff;text-shadow:0 0 1px #000,0 0 1px #000">-27.02 s</div>
<svg style="left:996.5px;top:201px" width="15" height="14"><path d="M0.5,1 L14.5,1 L7.5,13.5 Z" fill="#fff"/></svg><div class="a" style="left:964px;top:203px;width:32px;text-align:right;font-size:9px;letter-spacing:-0.5px;color:#fff;text-shadow:0 0 1px #000,0 0 1px #000">-11.27 s</div>
<svg style="left:109px;top:243px" width="14" height="13"><path d="M0.5,0.5 L12.5,0.5 L6.5,12 Z" fill="#1ea8ec"/></svg>
<div class="a" style="left:135px;top:241px;font-size:15.45px;color:#22a6e6">SiWG917 Single-band Wi-Fi and BLE 8MB Flash Radio Board</div>
<svg style="left:569px;top:242px" width="17" height="16"><rect x="0.75" y="0.75" width="15" height="14.5" fill="none" stroke="#1f9fe0" stroke-width="1.3"/><path d="M4.5,6 L8.25,9.5 L12,6" fill="none" stroke="#1f9fe0" stroke-width="1.2"/></svg>
<div class="a" style="left:616px;top:240px;width:35px;height:19px;background:#1f86cc;color:#f4f8fc;font-size:14px;line-height:19px;text-align:center">CH0</div>
<div class="a" style="left:658px;top:240px;width:35px;height:19px;background:#a8dc8c;color:#303030;font-size:14px;line-height:19px;text-align:center">CH1</div>
<div class="a" style="left:700px;top:240px;width:35px;height:19px;background:#cf3a3c;color:#f4e8e8;font-size:14px;line-height:19px;text-align:center">CH2</div>
<div class="a" style="left:742px;top:240px;width:35px;height:19px;background:#f6ba3e;color:#303030;font-size:14px;line-height:19px;text-align:center">CH3</div>
<div class="a" style="left:784px;top:240px;width:35px;height:19px;background:#9e9e9e;color:#eeeeee;font-size:14px;line-height:19px;text-align:center">CH4</div>
<div class="a" style="left:826px;top:240px;width:35px;height:19px;background:#9e9e9e;color:#eeeeee;font-size:14px;line-height:19px;text-align:center">CH5</div>
<div class="a" style="left:868px;top:240px;width:35px;height:19px;background:#9e9e9e;color:#eeeeee;font-size:14px;line-height:19px;text-align:center">CH6</div>
<div class="a" style="left:910px;top:240px;width:35px;height:19px;background:#9e9e9e;color:#eeeeee;font-size:14px;line-height:19px;text-align:center">CH7</div>
<div class="a" style="left:1022px;top:227px;width:201px;height:46.5px;background:#2b2c2e;border-radius:4px"></div>
<div class="a" style="left:1106px;top:227px;width:1px;height:46.5px;background:#3a3b3e"></div>
<div class="a" style="left:1196px;top:227px;width:1px;height:46.5px;background:#3a3b3e"></div>
<div class="a" style="left:1197px;top:250px;width:26px;height:1px;background:#3a3b3e"></div>
<div class="a" style="left:1028px;top:231px;font-size:15.4px;color:#e6e6e6">49.44 <span style="color:#a0a0a0">s</span></div>
<div class="a" style="left:1029px;top:252.5px;font-size:15.4px;color:#e6e6e6">154.56 <span style="color:#a0a0a0">μA</span></div>
<div class="a" style="left:1113.5px;top:231px;font-size:15.4px;color:#e6e6e6">508.20 <span style="color:#a0a0a0">μW</span></div>
<div class="a" style="left:1113.5px;top:252.5px;font-size:15.4px;color:#e6e6e6">7.03 <span style="color:#a0a0a0">μWh</span></div>
<svg style="left:1202px;top:232.5px" width="18.0" height="17.0" viewBox="0 0 18 17"><path d="M0.3,0.3 L0.3,8.3 L8.1,8.3 Z" fill="#e8e8e8"/><path d="M4.4,4.5 A6.4,6.4 0 1 1 4.5,12.7" fill="none" stroke="#e8e8e8" stroke-width="1.8"/></svg>
<svg style="left:1202px;top:254px" width="18.0" height="16.0" viewBox="0 0 18 16"><path d="M1.8,1 L1.8,13 L15.2,13 L15.2,1" fill="none" stroke="#e8e8e8" stroke-width="1.6"/><rect x="1" y="12.2" width="15" height="2.4" fill="#e8e8e8"/><rect x="7.3" y="0" width="2.5" height="7" fill="#e8e8e8"/><path d="M4.6,6.6 L12.4,6.6 L8.5,10.5 Z" fill="#e8e8e8"/></svg>
<div class="a" style="left:1227px;top:226.5px;width:180px;height:47.5px;background:#4b4c4f;border-radius:0 5px 5px 0"></div>
<div class="a" style="left:1380px;top:226.5px;width:1px;height:47.5px;background:#3f4043"></div>
<div class="a" style="left:1233px;top:231px;font-size:15.4px;color:#c9cdd2">15.75 <span style="color:#7d838a">s</span></div>
<div class="a" style="left:1233px;top:252.5px;font-size:15.4px;color:#c9cdd2">3.70 <span style="color:#7d838a">μA</span></div>
<div class="a" style="left:1301.5px;top:231px;font-size:15.4px;color:#c9cdd2">12.17 <span style="color:#7d838a">μW</span></div>
<div class="a" style="left:1301.5px;top:252.5px;font-size:15.4px;color:#c9cdd2">53.23 <span style="color:#7d838a">nWh</span></div>
<svg style="left:1385px;top:254px" width="18.0" height="16.0" viewBox="0 0 18 16"><path d="M1.8,1 L1.8,13 L15.2,13 L15.2,1" fill="none" stroke="#c9cdd2" stroke-width="1.6"/><rect x="1" y="12.2" width="15" height="2.4" fill="#c9cdd2"/><rect x="7.3" y="0" width="2.5" height="7" fill="#c9cdd2"/><path d="M4.6,6.6 L12.4,6.6 L8.5,10.5 Z" fill="#c9cdd2"/></svg>
<div class="a" style="left:1222px;top:216px;width:198px;height:69px;border:5px solid #ec1c24"></div>
<svg style="left:15px;top:279.5px" width="21.96" height="20.74" viewBox="0 0 18 17"><path d="M0.3,0.3 L0.3,8.3 L8.1,8.3 Z" fill="#1ea6e8"/><path d="M4.4,4.5 A6.4,6.4 0 1 1 4.5,12.7" fill="none" stroke="#1ea6e8" stroke-width="1.8"/></svg>
<svg style="left:15px;top:304px" width="20" height="20"><circle cx="10" cy="10" r="9" fill="none" stroke="#1ea6e8" stroke-width="1.4"/><path d="M5,10 L15,10 M10,5 L10,15" stroke="#1ea6e8" stroke-width="1.4"/></svg>
<div class="a" style="left:24px;top:327px;width:3.5px;height:92px;background:#161617"></div>
<svg style="left:15px;top:380px" width="20" height="20"><circle cx="10" cy="9.5" r="9.3" fill="#1ea6e8"/></svg>
<svg style="left:15px;top:423px" width="20" height="20"><circle cx="10" cy="10" r="9" fill="none" stroke="#1ea6e8" stroke-width="1.4"/><path d="M5,10 L15,10" stroke="#1ea6e8" stroke-width="1.4"/></svg>
<div class="a" style="left:27px;top:265.5px;width:60px;text-align:right;font-size:9px;color:#aaaaaa">500 mA</div>
<div class="a" style="left:27px;top:297.5px;width:60px;text-align:right;font-size:9px;color:#aaaaaa">100 mA</div>
<div class="a" style="left:27px;top:344.6px;width:60px;text-align:right;font-size:9px;color:#aaaaaa">10 mA</div>
<div class="a" style="left:27px;top:391.7px;width:60px;text-align:right;font-size:9px;color:#aaaaaa">1 mA</div>
<div class="a" style="left:27px;top:438.8px;width:60px;text-align:right;font-size:9px;color:#aaaaaa">100 μA</div>
<div class="a" style="left:27px;top:485.9px;width:60px;text-align:right;font-size:9px;color:#aaaaaa">10 μA</div>
<div class="a" style="left:27px;top:533.0px;width:60px;text-align:right;font-size:9px;color:#aaaaaa">1 μA</div>
<div class="a" style="left:27px;top:580.1px;width:60px;text-align:right;font-size:9px;color:#aaaaaa">100 nA</div>
<div class="a" style="left:27px;top:627.2px;width:60px;text-align:right;font-size:9px;color:#aaaaaa">10 nA</div>
<div class="a" style="left:27px;top:667.0px;width:60px;text-align:right;font-size:9px;color:#aaaaaa">1 nA</div>
<div class="a" style="left:31px;top:472px;width:40px;text-align:center;font-size:9.3px;color:#9a9a9a;transform:rotate(-90deg)">Current</div>
<svg style="left:13px;top:634px" width="26" height="50"><rect x="1.5" y="1.2" width="23" height="24.3" fill="none" stroke="#1ea6e8" stroke-width="1.6"/><rect x="1.5" y="25.5" width="23" height="23" fill="none" stroke="#1a86c0" stroke-width="1"/><path d="M8,19 C8,11 11,8 18,5.5" fill="none" stroke="#1ea6e8" stroke-width="1.2"/><path d="M7.5,43 L18,29" stroke="#1a86c0" stroke-width="1"/></svg>
<div class="a" style="left:90.5px;top:697px;width:60px;text-align:center;font-size:9px;letter-spacing:-0.3px;color:#a0a0a0">-35.00 s</div>
<div class="a" style="left:179px;top:697px;width:60px;text-align:center;font-size:9px;letter-spacing:-0.3px;color:#a0a0a0">-32.50 s</div>
<div class="a" style="left:271.5px;top:697px;width:60px;text-align:center;font-size:9px;letter-spacing:-0.3px;color:#a0a0a0">-30.00 s</div>
<div class="a" style="left:383px;top:697px;width:60px;text-align:center;font-size:9px;letter-spacing:-0.3px;color:#a0a0a0">-27.02 s</div>
<div class="a" style="left:458px;top:697px;width:60px;text-align:center;font-size:9px;letter-spacing:-0.3px;color:#a0a0a0">-25.00 s</div>
<div class="a" style="left:551px;top:697px;width:60px;text-align:center;font-size:9px;letter-spacing:-0.3px;color:#a0a0a0">-22.50 s</div>
<div class="a" style="left:645px;top:697px;width:60px;text-align:center;font-size:9px;letter-spacing:-0.3px;color:#a0a0a0">-20.00 s</div>
<div class="a" style="left:738px;top:697px;width:60px;text-align:center;font-size:9px;letter-spacing:-0.3px;color:#a0a0a0">-17.50 s</div>
<div class="a" style="left:831px;top:697px;width:60px;text-align:center;font-size:9px;letter-spacing:-0.3px;color:#a0a0a0">-15.00 s</div>
<div class="a" style="left:971px;top:697px;width:60px;text-align:center;font-size:9px;letter-spacing:-0.3px;color:#a0a0a0">-11.27 s</div>
<div class="a" style="left:1111px;top:697px;width:60px;text-align:center;font-size:9px;letter-spacing:-0.3px;color:#a0a0a0">-7.50 s</div>
<div class="a" style="left:1205px;top:697px;width:60px;text-align:center;font-size:9px;letter-spacing:-0.3px;color:#a0a0a0">-5.00 s</div>
<div class="a" style="left:1298px;top:697px;width:60px;text-align:center;font-size:9px;letter-spacing:-0.3px;color:#a0a0a0">-2.50 s</div>
<div class="a" style="left:1380.5px;top:697px;width:60px;text-align:center;font-size:9px;letter-spacing:-0.3px;color:#a0a0a0">0.00 s</div>
<div class="a" style="left:1201px;top:710.5px;font-size:16.5px;font-weight:bold;color:#7f8286">2.50 s</div>
<svg style="left:1252px;top:714px" width="13" height="9"><path d="M1,1.5 L6.5,7 L12,1.5" fill="none" stroke="#c8cdd4" stroke-width="1.3"/></svg>
<svg style="left:1265px;top:711px" width="18" height="18"><circle cx="9" cy="9" r="8" fill="none" stroke="#c8cdd4" stroke-width="1.2"/><path d="M4.5,9 L13.5,9" stroke="#c8cdd4" stroke-width="1.2"/></svg>
<div class="a" style="left:1286.5px;top:717.5px;width:92.5px;height:4.5px;background:#141414;border-radius:2px"></div>
<svg style="left:1311px;top:711px" width="18" height="18"><circle cx="8.5" cy="8.5" r="8" fill="#c8cdd4"/></svg>
<svg style="left:1381px;top:711px" width="18" height="18"><circle cx="9" cy="9" r="8" fill="none" stroke="#c8cdd4" stroke-width="1.2"/><path d="M4.5,9 L13.5,9 M9,4.5 L9,13.5" stroke="#c8cdd4" stroke-width="1.2"/></svg>
<svg style="left:1403.3px;top:711.5px" width="18.36" height="17.34" viewBox="0 0 18 17"><path d="M0.3,0.3 L0.3,8.3 L8.1,8.3 Z" fill="#c8cdd4"/><path d="M4.4,4.5 A6.4,6.4 0 1 1 4.5,12.7" fill="none" stroke="#c8cdd4" stroke-width="1.8"/></svg>
<div class="a" style="left:107px;top:739px;width:1308px;height:9px;background:#232325"></div>
<div class="a" style="left:494px;top:739px;width:921px;height:9px;background:#858585"></div>
<svg style="left:106px;top:738px" width="8" height="11"><path d="M6.5,0.5 L6.5,10.5 L0.5,5.5 Z" fill="#dcdcdc"/></svg>
<svg style="left:1415px;top:738px" width="8" height="11"><path d="M0.5,0.5 L0.5,10.5 L6.5,5.5 Z" fill="#dcdcdc"/></svg>
<div class="a" style="left:0;top:753px;width:1432px;height:176px;background:#f0f0f0"></div>
<div class="a" style="left:2px;top:756px;width:1426.5px;height:169px;border:1px solid #b4b4b4;border-radius:0 4px 0 0;background:#ebebeb"></div>
<div class="a" style="left:3px;top:779px;width:1424.5px;height:145px;background:#ffffff"></div>
<div class="a" style="left:2px;top:756px;width:166px;height:24px;background:#f7f7f7;border:1px solid #b4b4b4;border-top:2px solid #5e5e5e;border-bottom:none"></div>
<div class="a" style="left:349.5px;top:757px;width:1px;height:22px;background:#c8c8c8"></div>
<div class="a" style="left:487px;top:757px;width:1px;height:22px;background:#c8c8c8"></div>
<div class="a" style="left:3px;top:778px;width:1425px;height:1px;background:#c8c8c8"></div>
<div class="a" style="left:3px;top:778px;width:164px;height:2px;background:#f7f7f7"></div>
<svg style="left:5px;top:760px" width="17" height="17"><rect x="1" y="1" width="14" height="14" rx="2" fill="#fafcfd" stroke="#5584ab" stroke-width="1.3"/><rect x="1" y="1" width="14" height="2.2" fill="#5584ab"/><path d="M5.5,3 L5.5,14.5 M10,3 L10,8 M1.5,6.5 L14.5,6.5 M1.5,9.5 L8,9.5 M1.5,12.5 L6,12.5" stroke="#9db5cc" stroke-width="0.9"/><path d="M2.5,11 L8,11" stroke="#4a9ad0" stroke-width="1.3"/><path d="M8,8.5 Q12.5,8 12.5,11 Q12.5,14 8,13.5 Z" fill="#4a9ad0"/><rect x="12" y="8.3" width="4" height="1.3" fill="#1d4f78"/><rect x="12" y="12.3" width="4" height="1.3" fill="#1d4f78"/></svg>
<div class="a" style="left:24px;top:760.5px;font-size:13.7px;color:#1a1a1a">Energy Profile (live)</div>
<svg style="left:151px;top:762px" width="13" height="13"><path d="M1.5,1.5 L11.5,11.5 M11.5,1.5 L1.5,11.5" stroke="#505050" stroke-width="1.1"/></svg>
<svg style="left:172px;top:760px" width="17" height="17"><rect x="1" y="1" width="14" height="14" rx="2" fill="#fafcfd" stroke="#5584ab" stroke-width="1.3"/><rect x="1" y="1" width="14" height="2.2" fill="#5584ab"/><path d="M5.5,3 L5.5,14.5 M10,3 L10,8 M1.5,6.5 L14.5,6.5 M1.5,9.5 L8,9.5 M1.5,12.5 L6,12.5" stroke="#9db5cc" stroke-width="0.9"/><path d="M2.5,11 L8,11" stroke="#4a9ad0" stroke-width="1.3"/><path d="M8,8.5 Q12.5,8 12.5,11 Q12.5,14 8,13.5 Z" fill="#4a9ad0"/><rect x="12" y="8.3" width="4" height="1.3" fill="#1d4f78"/><rect x="12" y="12.3" width="4" height="1.3" fill="#1d4f78"/></svg>
<div class="a" style="left:191px;top:760.5px;font-size:13.7px;color:#1a1a1a">Energy Profile (range)</div>
<div class="a" style="left:353.5px;top:765px;width:5.5px;height:5.5px;background:#e8141c"></div>
<div class="a" style="left:363px;top:760.5px;font-size:13.7px;color:#1a1a1a">Device Manager</div>
<svg style="left:1386px;top:760px" width="12" height="6"><rect x="1" y="1" width="9.5" height="3.5" fill="#fff" stroke="#333" stroke-width="1.1"/></svg>
<svg style="left:1408px;top:760px" width="12" height="12"><rect x="1" y="1" width="9.5" height="10" fill="#fff" stroke="#333" stroke-width="1.1"/><path d="M1,3 L10.5,3" stroke="#333" stroke-width="1.5"/></svg>
<div class="a" style="left:6px;top:782.5px;width:350px;overflow:hidden;font-size:13.45px;color:#1a1a1a">SiWG917 Single-band Wi-Fi and BLE 8MB Flash Radio Board</div>
<div class="a" style="left:3px;top:904px;width:356px;height:20px;background:#f0f0f0"></div>
<div class="a" style="left:24px;top:910px;width:298px;height:6px;background:#858585"></div>
<div class="a" style="left:362px;top:780.5px;width:1064.5px;height:142px;border:1.5px solid #a8a8a8;background:#ffffff"></div>
<div class="a" style="left:787.5px;top:809.5px;width:637px;height:111.5px;background:#f6f6f6"></div>
<div class="a" style="left:364px;top:833.5px;width:1061px;height:1px;background:#eeeeee"></div>
<div class="a" style="left:364px;top:858.5px;width:1061px;height:1px;background:#eeeeee"></div>
<div class="a" style="left:364px;top:883.5px;width:1061px;height:1px;background:#eeeeee"></div>
<div class="a" style="left:364px;top:908.5px;width:1061px;height:1px;background:#eeeeee"></div>
<div class="a" style="left:381.5px;top:782px;width:1px;height:139px;background:#ececec"></div>
<div class="a" style="left:613px;top:782px;width:1px;height:139px;background:#ececec"></div>
<div class="a" style="left:787px;top:782px;width:1px;height:139px;background:#ececec"></div>
<div class="a" style="left:369px;top:787px;width:12px;overflow:hidden;font-size:15.5px;font-weight:bold;color:#111">C</div>
<div class="a" style="left:388px;top:787px;font-size:15px;font-weight:bold;color:#111">Function</div>
<div class="a" style="left:619px;top:787px;font-size:15px;font-weight:bold;color:#111">Energy</div>
<div class="a" style="left:792px;top:787px;font-size:15.6px;font-weight:bold;color:#111">Contribution (%)</div>
<svg style="left:1099px;top:782px" width="12" height="7"><path d="M1,1 L6,5.5 L11,1" fill="none" stroke="#808080" stroke-width="1"/></svg>
</body></html>
